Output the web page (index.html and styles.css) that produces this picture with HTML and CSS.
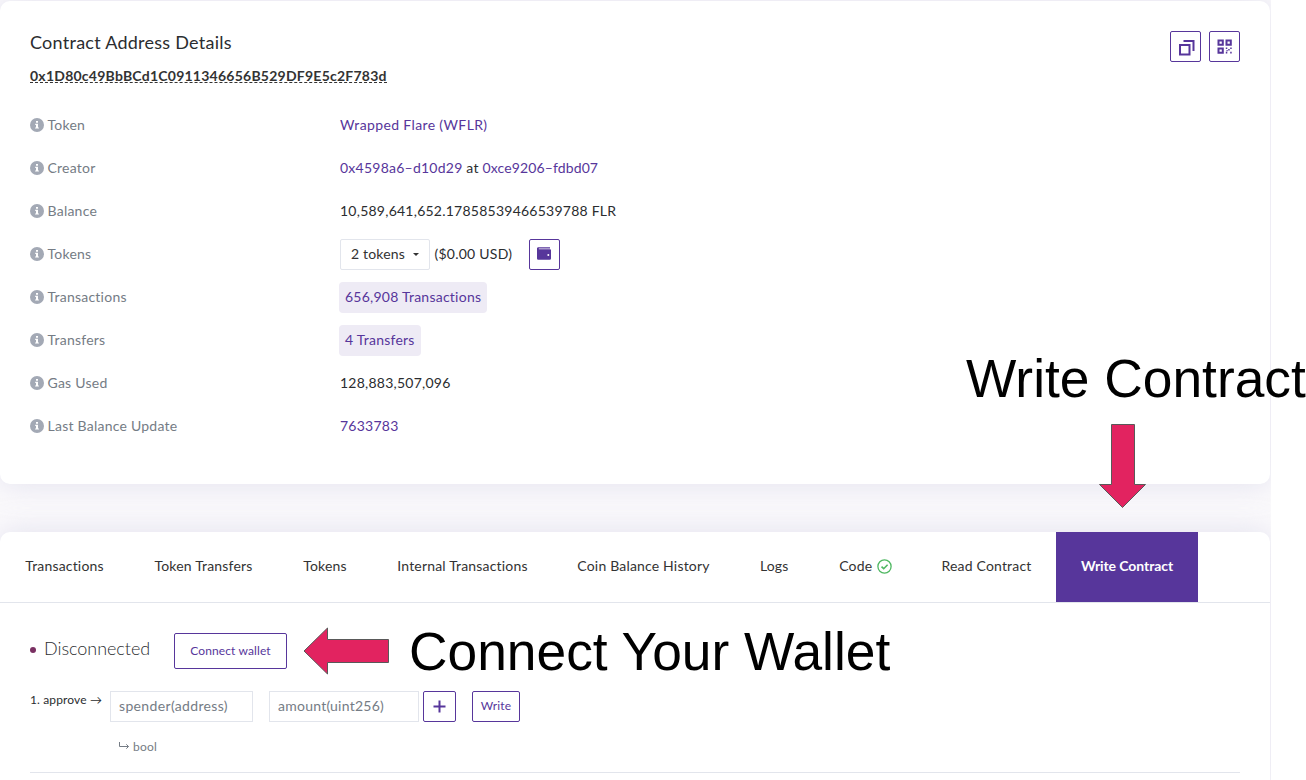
FILE: index.html
```html
<!DOCTYPE html>
<html lang="en">
<head>
<meta charset="utf-8">
<title>Contract Address Details</title>
<link rel="stylesheet" href="styles.css">
</head>
<body>
<svg class="defs" width="0" height="0" aria-hidden="true">
  <symbol id="info" viewBox="0 0 14 14">
    <circle cx="7" cy="7" r="7" fill="#a3a9b5"/>
    <path fill="#fff" d="M6 3h2v1.700H6zM5.200 5.800H8v3.600h.9v1.200H5.100V9.400H6V7h-.8z"/>
  </symbol>
</svg>
<div class="page">
  <section class="card details">
    <header class="head">
      <div>
        <h1 class="title">Contract Address Details</h1>
        <h2 class="hash"><span>0x1D80c49BbBCd1C0911346656B529DF9E5c2F783d</span></h2>
      </div>
      <div class="actions">
        <button class="icon-btn"><svg width="31" height="31" viewBox="0 0 31 31"><path fill="none" stroke="#57369b" stroke-width="2" d="M13.500 10h10v10M10 14h9.500v9.500H10z"/></svg></button>
        <button class="icon-btn"><svg width="31" height="31" viewBox="0 0 31 31"><path fill="none" stroke="#57369b" stroke-width="2" d="M9.500 9.500h4.300v4.300H9.500zM17.500 9.500h4.300v4.300h-4.300zM9.500 17.500h4.300v4.300H9.500z"/><path fill="#57369b" d="M16.800 16.500h1.500V18h-1.500zM21.200 16.500h1.500V18h-1.500zM19.200 18h1.500v1.500h-1.500zM16.800 20.800h1.500v1.700h-1.500zM21.200 20.800h1.500v1.700h-1.500zM17.500 19h1.200v1.200h-1.200z"/></svg></button>
      </div>
    </header>
    <dl class="rows">
      <div class="row"><dt><svg class="info"><use href="#info"/></svg>Token</dt><dd><a class="wide">Wrapped Flare (WFLR)</a></dd></div>
      <div class="row"><dt><svg class="info"><use href="#info"/></svg>Creator</dt><dd><a>0x4598a6–d10d29</a>&nbsp;at&nbsp;<a class="tight">0xce9206–fdbd07</a></dd></div>
      <div class="row"><dt><svg class="info"><use href="#info"/></svg>Balance</dt><dd>10,589,641,652.17858539466539788 FLR</dd></div>
      <div class="row"><dt><svg class="info"><use href="#info"/></svg>Tokens</dt><dd><button class="select">2 tokens<i class="caret"></i></button><span class="usd">($0.00 USD)</span><button class="icon-btn"><svg width="31" height="31" viewBox="0 0 31 31"><path fill="#57369b" d="M9 8.300h12v1.200H9.800v.8H21a1 1 0 0 1 1 1v8.200a1.300 1.300 0 0 1-1.300 1.300H9.300A1.300 1.300 0 0 1 8 19.500V9.600a1.300 1.300 0 0 1 1-1.300z"/><circle cx="19.300" cy="16" r="1" fill="#fff"/></svg></button></dd></div>
      <div class="row"><dt><svg class="info"><use href="#info"/></svg>Transactions</dt><dd><a class="badge">656,908 Transactions</a></dd></div>
      <div class="row"><dt><svg class="info"><use href="#info"/></svg>Transfers</dt><dd><a class="badge">4 Transfers</a></dd></div>
      <div class="row"><dt><svg class="info"><use href="#info"/></svg>Gas Used</dt><dd>128,883,507,096</dd></div>
      <div class="row"><dt><svg class="info"><use href="#info"/></svg>Last Balance Update</dt><dd><a>7633783</a></dd></div>
    </dl>
  </section>

  <section class="card contract">
    <nav class="tabs">
      <a>Transactions</a>
      <a>Token Transfers</a>
      <a>Tokens</a>
      <a>Internal Transactions</a>
      <a>Coin Balance History</a>
      <a>Logs</a>
      <a>Code <svg class="check" width="15" height="15" viewBox="0 0 15 15" fill="none" stroke="#4fb862" stroke-width="1.300"><circle cx="7.500" cy="7.500" r="6.600"/><path stroke-width="1.600" d="M4.500 7.600l2.200 2.100 3.900-4"/></svg></a>
      <a>Read Contract</a>
      <a class="active">Write Contract</a>
    </nav>
    <div class="body">
      <div class="status">
        <i class="dot"></i><span class="state">Disconnected</span>
        <button class="btn connect">Connect wallet</button>
      </div>
      <div class="fn">
        <span class="fn-name">1. approve →</span>
        <input class="field spender" placeholder="spender(address)">
        <input class="field amount" placeholder="amount(uint256)">
        <button class="btn plus"><svg width="13" height="13" viewBox="0 0 13 13"><path stroke="#57369b" stroke-width="2" d="M6.500 .5v12M.5 6.500h12"/></svg></button>
        <button class="btn write">Write</button>
      </div>
      <div class="returns"><svg width="12" height="10" viewBox="0 0 12 10" fill="none" stroke="#757c85"><path d="M1.500 0v4.500h9M8.300 2.300l2.200 2.200-2.200 2.200"/></svg>bool</div>
    </div>
  </section>

  <div class="note note-write">Write Contract</div>
  <svg class="arrow arrow-down" width="48" height="86" viewBox="0 0 48 86"><path d="M12.500 1.500h23v60h11l-23 23-23-23h12z"/></svg>
  <svg class="arrow arrow-left" width="87" height="48" viewBox="0 0 87 48"><path d="M1 24L24.500 1v11.500h61v23h-61V47z"/></svg>
  <div class="note note-connect">Connect Your Wallet</div>
</div>
</body>
</html>
```
FILE: styles.css
```css
* { box-sizing: border-box; }
body { margin: 0; background: #fff; overflow: hidden; font: 14px/29px Lato, sans-serif; letter-spacing: .24px; color: #2b2d30; }
button, input { font: inherit; letter-spacing: inherit; margin: 0; }
a { color: #57369b; }
.defs { display: block; }
.page { width: 1271px; height: 780px; padding-top: 1px; background: #fbfafc; clip-path: inset(0 -40px 0 0); }
.card { width: 1270px; background: #fff; border-radius: 10px; box-shadow: 0 0 30px rgba(202, 199, 226, .5); }
.page::after { content: ""; position: absolute; left: 1271px; top: 0; width: 35px; height: 780px; background: #fff; }

.details { height: 483px; padding: 29px 30px 0; margin-bottom: 48px; }
.head { display: flex; justify-content: space-between; height: 80px; }
.title { margin: 0; font-size: 18px; font-weight: 400; line-height: 24px; letter-spacing: .26px; }
.hash { margin: 12px 0 0; font-size: 14px; line-height: 20px; color: #333; }
.hash span { display: inline-block; height: 17px; border-bottom: 1px dashed #333; }
.actions { display: flex; gap: 8px; padding-top: 1px; }
.icon-btn { flex: none; width: 31px; height: 31px; padding: 0; border: 1px solid #57369b; border-radius: 2px; background: #fff; }
.icon-btn svg { display: block; margin: -1px; }

.rows { margin: 0; display: grid; gap: 12px; }
.row { display: flex; height: 31px; }
dt { display: flex; align-items: center; gap: 3.500px; width: 310px; height: 29px; color: #757c85; }
.info { width: 14px; height: 14px; }
dd { display: flex; margin: 0; white-space: nowrap; }
.wide { letter-spacing: .37px; }
.tight { letter-spacing: .12px; }
.select { display: flex; align-items: center; justify-content: space-between; width: 90px; height: 31px; padding: 0 10px 2px; border: 1px solid #e2e5ec; border-radius: 2px; background: #fff; color: #333; line-height: 27px; letter-spacing: .17px; white-space: nowrap; }
.caret { margin-top: 2px; border: 3px solid transparent; border-top-color: #333; border-bottom: 0; }
.usd { width: 94.500px; margin-left: 4.500px; }
.badge { margin-left: -1px; padding: 0 6px; border-radius: 4px; background: #eeebf5; letter-spacing: .24px; }

.contract { height: 260px; }
.tabs { display: grid; grid-template-columns: 129px 149px 94px 181px 181px 80.500px 102.500px 139px 142px; height: 71px; border-bottom: 1px solid #e2e5ec; letter-spacing: .18px; }
.tabs a { display: flex; align-items: center; justify-content: center; gap: 5px; height: 70px; padding-bottom: 3px; color: #333; }
.check { margin-top: 2px; }
.tabs .active { background: #57369b; color: #fff; font-weight: 700; letter-spacing: -.08px; }
.body { margin: 0 30px; padding-top: 30px; height: 170px; border-bottom: 1px solid #e2e5ec; }
.status { display: flex; height: 36px; }
.dot { width: 6px; height: 6px; margin: 14px 8px 0 0; border-radius: 50%; background: #7a3062; }
.state { width: 130px; font-size: 18px; line-height: 31px; font-weight: 300; letter-spacing: -.04px; }
.btn { display: flex; align-items: center; justify-content: center; padding: 0 0 2px; border: 1px solid #57369b; border-radius: 2px; background: #fff; color: #57369b; font-size: 12px; letter-spacing: .12px; }
.connect { width: 113px; height: 36px; }
.fn { display: flex; height: 31px; margin-top: 22px; }
.fn-name { width: 80px; font-size: 12px; line-height: 18px; letter-spacing: .13px; }
.field { height: 31px; padding: 0 8px 2px; border: 1px solid #e2e5ec; background: #fff; }
.field::placeholder { color: #757c85; opacity: 1; }
.spender { width: 143px; margin-right: 16px; letter-spacing: .35px; }
.amount { width: 150px; margin-right: 4px; }
.plus { width: 33px; margin-right: 16px; padding: 0; }
.write { width: 48px; }
.returns { display: flex; align-items: center; gap: 3px; margin: 16px 0 0 88px; font-size: 12px; line-height: 18px; color: #757c85; }

/* Callouts laid over the screen */
.note, .arrow { position: absolute; z-index: 2; }
.note { font: 53.33px/60px "Liberation Sans", Arial, sans-serif; letter-spacing: 0; color: #000; white-space: nowrap; }
.note-write { left: 966px; top: 349px; }
.note-connect { left: 409px; top: 622px; }
.arrow path { fill: #e22360; stroke: #595959; }
.arrow-down { left: 1099px; top: 423px; }
.arrow-left { left: 303px; top: 627px; }
```
